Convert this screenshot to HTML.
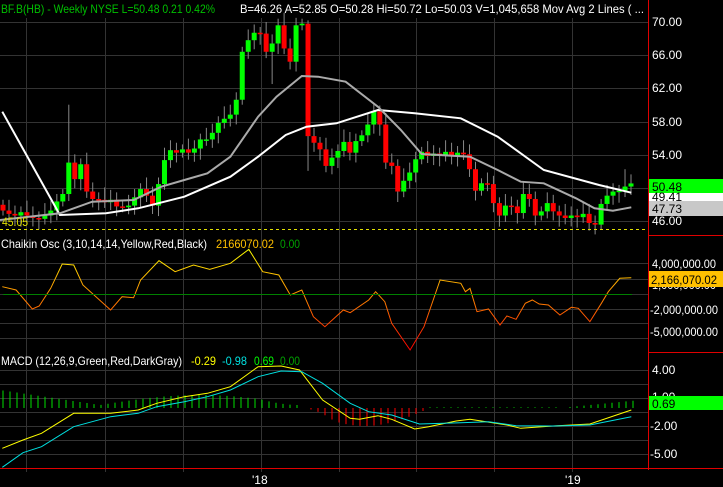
<!DOCTYPE html>
<html><head><meta charset="utf-8"><style>
html,body{margin:0;padding:0;background:#000;width:723px;height:487px;overflow:hidden;font-family:"Liberation Sans",sans-serif}
svg{position:absolute;left:0;top:0}
text{font-family:"Liberation Sans",sans-serif;font-size:12px}
</style></head><body>
<svg id="s" width="723" height="487" viewBox="0 0 723 487">
<defs>
<linearGradient id="cg" gradientUnits="userSpaceOnUse" x1="0" y1="250" x2="0" y2="350">
<stop offset="0" stop-color="#ffff00"/><stop offset="0.5" stop-color="#ff8000"/><stop offset="1" stop-color="#ff0000"/></linearGradient>
</defs>
<g id="grid" stroke="#333" stroke-width="1"></g>
<g id="cand"></g>
<g id="ind"></g>
<line x1="648.5" y1="0" x2="648.5" y2="470" stroke="#e00000"/>
<line x1="648" y1="235.5" x2="723" y2="235.5" stroke="#e00000"/>
<line x1="648" y1="352.5" x2="723" y2="352.5" stroke="#e00000"/>
<line x1="0" y1="468.5" x2="723" y2="468.5" stroke="#e00000"/>
<line x1="0" y1="229.5" x2="648" y2="229.5" stroke="#e0e000" stroke-dasharray="3,3"/>
<line x1="3" y1="294.5" x2="632" y2="294.5" stroke="#008000"/>
<text x="1" y="13" fill="#00c000" textLength="214" lengthAdjust="spacingAndGlyphs">BF.B(HB) - Weekly  NYSE  L=50.48  0.21  0.42%</text>
<text x="240" y="13" fill="#fff" textLength="404" lengthAdjust="spacingAndGlyphs">B=46.26  A=52.85  O=50.28  Hi=50.72  Lo=50.03  V=1,045,658  Mov Avg 2 Lines ( ...</text>
<text x="2" y="226" fill="#e0e000" textLength="26" lengthAdjust="spacingAndGlyphs">45.05</text>
<g fill="#fff">
<text x="652" y="26">70.00</text><text x="652" y="59">66.00</text><text x="652" y="92">62.00</text>
<text x="652" y="126">58.00</text><text x="652" y="159">54.00</text><text x="652" y="225">46.00</text>
</g>
<rect x="649" y="179" width="74" height="14" fill="#00ff00"/><text x="652" y="191" fill="#000">50.48</text>
<rect x="649" y="193" width="74" height="8" fill="#fff"/><text x="652" y="201" fill="#000">49.41</text>
<rect x="649" y="201" width="74" height="15" fill="#c8c8c8"/><text x="652" y="213" fill="#000">47.73</text>
<text x="1" y="248" fill="#fff" textLength="206" lengthAdjust="spacingAndGlyphs">Chaikin Osc (3,10,14,14,Yellow,Red,Black)</text>
<text x="216" y="248" fill="#ffc000" textLength="58" lengthAdjust="spacingAndGlyphs">2166070.02</text><text x="280" y="248" fill="#00a000" textLength="20" lengthAdjust="spacingAndGlyphs">0.00</text>
<g fill="#fff"><text x="652" y="268" textLength="64" lengthAdjust="spacingAndGlyphs">4,000,000.00</text><text x="652" y="289" textLength="64" lengthAdjust="spacingAndGlyphs">1,000,000.00</text><text x="650" y="314" textLength="68" lengthAdjust="spacingAndGlyphs">-2,000,000.00</text><text x="650" y="336" textLength="68" lengthAdjust="spacingAndGlyphs">-5,000,000.00</text></g>
<rect x="649" y="271" width="74" height="16" fill="#ffc000"/><text x="651" y="284" fill="#000" textLength="66" lengthAdjust="spacingAndGlyphs">2,166,070.02</text>
<text x="1" y="365" fill="#fff" textLength="181" lengthAdjust="spacingAndGlyphs">MACD (12,26,9,Green,Red,DarkGray)</text>
<text x="191" y="365" fill="#ffff00" textLength="25" lengthAdjust="spacingAndGlyphs">-0.29</text><text x="222" y="365" fill="#00e0e0" textLength="25" lengthAdjust="spacingAndGlyphs">-0.98</text><text x="254" y="365" fill="#00ff00" textLength="20" lengthAdjust="spacingAndGlyphs">0.69</text><text x="280" y="365" fill="#00a000" textLength="20" lengthAdjust="spacingAndGlyphs">0.00</text>
<g fill="#fff"><text x="652" y="374">4.00</text><text x="652" y="401">1.00</text><text x="650" y="430">-2.00</text><text x="650" y="458">-5.00</text></g>
<rect x="649" y="396" width="74" height="14" fill="#00ff00"/><text x="652" y="408" fill="#000">0.69</text>
<text x="252" y="484" fill="#fff">'18</text><text x="565" y="484" fill="#fff">'19</text>
</svg>
<script>
var NS="http://www.w3.org/2000/svg",s=document.getElementById('s');
function el(p,t,a){var e=document.createElementNS(NS,t);for(var k in a)e.setAttribute(k,a[k]);p.appendChild(e);return e}
var G=document.getElementById('grid'),C=document.getElementById('cand'),I=document.getElementById('ind');
[26,105,183,261,339,416,494,572].forEach(function(x){el(G,'line',{x1:x+.5,y1:18,x2:x+.5,y2:472});});
[22,55,88,122,155,188,221,263,279,294,309,323,338,370,384,398,412,426,440,454].forEach(function(y){el(G,'line',{x1:0,y1:y+.5,x2:648,y2:y+.5});});
function py(p){return 22+(70-p)*8.27}
var cl=[47.2,46.8,46.6,47,46.6,46.3,46.2,46.6,47.2,48.3,49.2,53,51,52.8,49.5,48.6,48.5,48.2,48.5,47.7,47.6,47.8,48.8,49.8,49,47.8,50.4,53.3,54.5,54.2,54.6,54.2,54.7,55.8,55.8,56.6,57.8,58.3,58.8,60.6,66.4,67.8,68.7,68.6,66.4,67.4,69.6,66.8,65.2,69.6,69.8,56.2,55.4,54.6,52.6,53.6,54.4,55.5,54.2,55.6,56.3,57.6,59.2,57.6,53,52.6,49.5,50.8,51.8,53.4,54.3,53.8,54.1,53.9,54.3,53.8,54.2,54.0,52.2,49.6,50.5,50.4,48.1,46.6,47.8,47.7,46.9,49.2,48.6,46.6,47.1,48.1,47.1,46.6,46.3,46.6,46.4,46.8,45.7,45.5,48,49,49.5,49.6,50.1,50.48];
var prev=47.9,n=cl.length,sp=(631-3)/(n-1);
cl.forEach(function(c,i){var x=3+i*sp,o=prev,hi=Math.max(o,c)+0.6+((i*37)%10)/10,lo=Math.min(o,c)-0.6-((i*53)%10)/12;
if(i==11)hi=60;if(i==51){o=69.8;hi=70.2;lo=52;} if(i==45)lo=62.5;if(i==n-2)hi=52.2;
var up=c>=o,col=up?'#00ff00':'#ff0000';
el(C,'line',{x1:x,y1:py(hi),x2:x,y2:py(lo),stroke:'#888','stroke-width':1});
var y1=py(Math.max(o,c)),h=Math.max(1.5,Math.abs(py(o)-py(c)));
el(C,'rect',{x:x-2.5,y:y1,width:5,height:h,fill:col});prev=c;});
function pl(pts,st,w,sy){var d=pts.map(function(p,i){return(i?'L':'M')+(p[0]/2.17).toFixed(1)+' '+(p[1]/3+(sy||0)).toFixed(1)}).join('');el(I,'path',{d:d,fill:'none',stroke:st,'stroke-width':w});}
pl([[5,335],[130,645],[230,640],[300,625],[400,590],[500,530],[560,470],[620,405],[665,380],[730,370],[820,330],[900,340],[1000,355],[1080,410],[1180,510],[1300,555],[1370,578]],'#fff',2);
pl([[0,660],[130,640],[200,605],[290,600],[350,560],[400,540],[450,520],[500,470],[560,350],[600,290],[655,228],[690,230],[750,245],[820,320],[870,390],[915,462],[1020,470],[1080,510],[1130,545],[1180,550],[1250,595],[1290,625],[1330,632],[1370,622]],'#aaa',2);
pl([[5,170],[35,180],[70,237],[85,228],[110,175],[135,102],[160,105],[180,165],[240,240],[265,200],[290,203],[305,150],[345,92],[380,125],[420,105],[455,118],[500,100],[540,58],[570,125],[605,135],[630,195],[655,180],[680,260],[705,290],[745,240],[760,248],[800,210],[815,185],[835,215],[850,280],[890,360],[920,290],[955,150],[1000,160],[1010,185],[1020,175],[1035,245],[1060,237],[1085,285],[1100,258],[1120,268],[1140,220],[1155,210],[1170,222],[1190,225],[1215,255],[1240,232],[1255,235],[1280,275],[1305,220],[1320,185],[1345,145],[1370,143]],'url(#cg)',1,230);
var z=408;
for(var i=0;i<91;i++){var x=3+i*7,h;
if(x<100)h=18-x*0.15;else if(x<300)h=3+10*Math.sin((x-100)/200*Math.PI)*(x>260?(300-x)/40:1);else if(x<430)h=-18*Math.sin((x-300)/130*Math.PI)*(x<335?(x-300)/35:1);else if(x<560)h=0.7;else h=(x-560)/10;
if(Math.abs(h)<0.5)continue;el(I,'line',{x1:x,y1:z,x2:x,y2:z-h,stroke:h>0?'#00e000':'#ff0000','stroke-width':1});}
pl([[5,655],[50,630],[90,610],[160,550],[240,550],[300,540],[340,520],[400,500],[450,490],[500,470],[560,410],[610,408],[650,420],[700,510],[760,565],[780,568],[820,557],[850,568],[900,597],[930,590],[990,573],[1020,568],[1100,585],[1130,595],[1200,588],[1280,582],[1370,540]],'#ffff00',1,230);
pl([[5,712],[50,668],[90,650],[160,590],[240,560],[300,550],[340,530],[400,515],[450,500],[500,480],[560,440],[610,423],[655,425],[700,460],[760,520],[800,545],[850,555],[910,582],[1000,578],[1060,575],[1120,587],[1200,588],[1280,585],[1370,560]],'#00e0e0',1,230);
</script>
</body></html>
